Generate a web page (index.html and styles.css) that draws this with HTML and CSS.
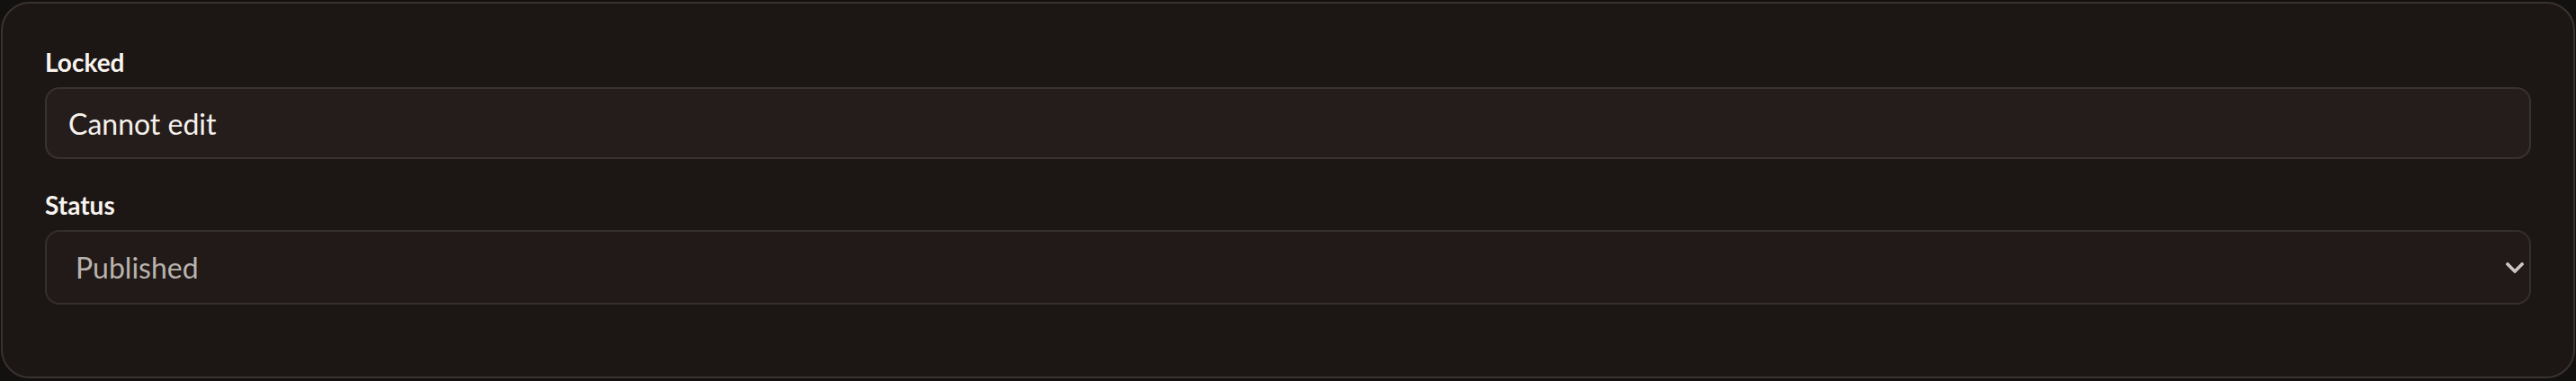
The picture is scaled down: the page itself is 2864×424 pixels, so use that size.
FILE: index.html
```html
<!DOCTYPE html>
<html lang="en">
<head>
<meta charset="utf-8">
<title>Form</title>
<link rel="stylesheet" href="styles.css">
</head>
<body>
<div class="page">
  <form class="card">
    <div class="field">
      <label class="label" for="locked">Locked</label>
      <input class="control input" id="locked" type="text" value="Cannot edit" readonly>
    </div>
    <div class="field">
      <label class="label" for="status">Status</label>
      <div class="select-wrap">
        <select class="control select" id="status">
          <option>Published</option>
          <option>Draft</option>
        </select>
        <svg class="chevron" width="20" height="12" viewBox="0 0 20 12" aria-hidden="true">
          <path d="M2 2 L10 10 L18 2" fill="none" stroke="#cbc6c2" stroke-width="3.6" stroke-linecap="square"/>
        </svg>
      </div>
    </div>
  </form>
</div>
</body>
</html>
```
FILE: styles.css
```css
html, body {
  margin: 0;
  padding: 0;
  background: #131010;
}
body {
  font-family: Lato, "Noto Sans", sans-serif;
  color: #f6f1ec;
}
.page {
  padding: 2px 1px 3px 1px;
}
.card {
  background: #1c1714;
  border: 2px solid #3a322f;
  border-radius: 32px;
  padding: 45px 47px 16px 47px;
  height: 419px;
  box-sizing: border-box;
}
.field {
  display: flex;
  flex-direction: column;
  gap: 8px;
  margin-bottom: 31px;
}
.label {
  font-size: 28px;
  line-height: 40px;
  font-weight: 700;
  color: #f8f4ef;
}
.control {
  width: 100%;
  box-sizing: border-box;
  font-family: inherit;
  font-size: 32px;
  border: 2px solid #3a3230;
  border-radius: 16px;
  background: #251d1b;
  margin: 0;
  outline: none;
}
.input {
  height: 80px;
  padding: 0 24px;
  color: #f6f1ec;
}
.select-wrap {
  position: relative;
}
.select {
  appearance: none;
  -webkit-appearance: none;
  height: 83px;
  padding: 0 32px;
  color: #b9b3ae;
  background: #221a18;
  border-color: #362e2c;
}
.chevron {
  position: absolute;
  right: 8px;
  top: 36px;
  pointer-events: none;
}
```
